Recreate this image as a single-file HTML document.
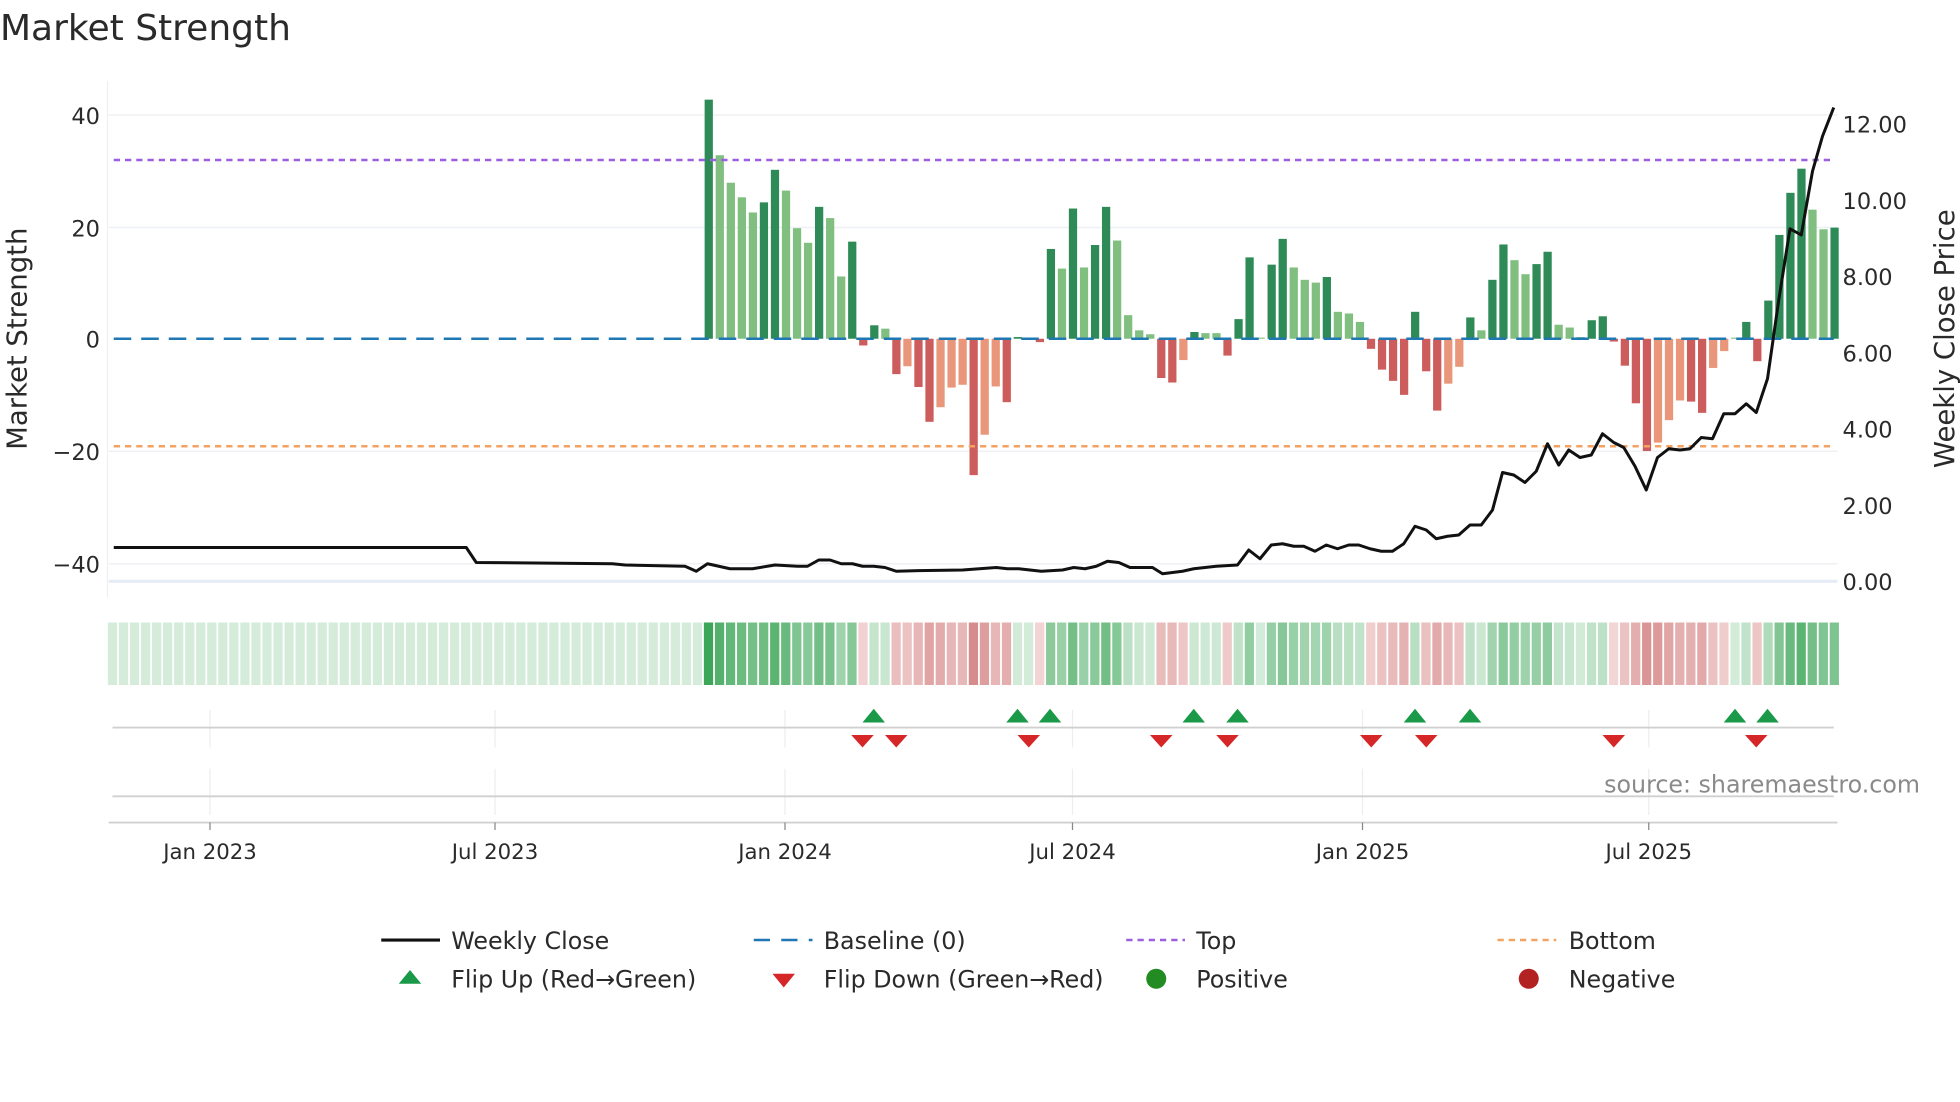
<!DOCTYPE html>
<html><head><meta charset="utf-8"><style>
html,body{margin:0;padding:0;background:#fff;width:1960px;height:1102px;overflow:hidden}
svg{display:block}
text{font-family:"DejaVu Sans","Liberation Sans",sans-serif;fill:#2a2a2a}
</style></head><body>
<svg id="s" width="1960" height="1102" viewBox="0 0 1568 881.6" preserveAspectRatio="none" xmlns="http://www.w3.org/2000/svg">
<text x="0" y="32" font-size="28.8">Market Strength</text>
<line x1="86" y1="65" x2="86" y2="478" stroke="#eef0f3" stroke-width="1"/>
<g stroke="#eef0f3" stroke-width="1.2">
<line x1="87" y1="92" x2="1470" y2="92"/><line x1="87" y1="182" x2="1470" y2="182"/>
<line x1="87" y1="361" x2="1470" y2="361"/><line x1="87" y1="451" x2="1470" y2="451"/>
</g>
<line x1="87" y1="465" x2="1470" y2="465" stroke="#e6ecf5" stroke-width="2.5"/>
<g font-size="18" text-anchor="end">
<text x="80" y="99">40</text><text x="80" y="189">20</text><text x="80" y="278">0</text><text x="80" y="368">−20</text><text x="80" y="458">−40</text>
</g>
<g font-size="18">
<text x="1474" y="106">12.00</text><text x="1474" y="167">10.00</text><text x="1474" y="228">8.00</text><text x="1474" y="289">6.00</text><text x="1474" y="350">4.00</text><text x="1474" y="411">2.00</text><text x="1474" y="472">0.00</text>
</g>
<text font-size="22" transform="translate(21,271) rotate(-90)" text-anchor="middle">Market Strength</text>
<text font-size="22" transform="translate(1563,271) rotate(-90)" text-anchor="middle">Weekly Close Price</text>
<g id="bars"></g>
<line x1="91" y1="271" x2="1467" y2="271" stroke="#1f77b4" stroke-width="2" stroke-dasharray="14,8"/>
<line x1="91" y1="128" x2="1467" y2="128" stroke="#9b5fe0" stroke-width="2" stroke-dasharray="5,4"/>
<line x1="91" y1="357" x2="1467" y2="357" stroke="#f4a261" stroke-width="2" stroke-dasharray="5,4"/>
<polyline id="line" fill="none" stroke="#111" stroke-width="2.4" stroke-linejoin="round"/>
<g id="heat"></g>
<g stroke="#eceef1" stroke-width="1">
<line x1="168" y1="568" x2="168" y2="598"/><line x1="396" y1="568" x2="396" y2="598"/><line x1="628" y1="568" x2="628" y2="598"/><line x1="858" y1="568" x2="858" y2="598"/><line x1="1090" y1="568" x2="1090" y2="598"/><line x1="1319" y1="568" x2="1319" y2="598"/>
<line x1="168" y1="615" x2="168" y2="652"/><line x1="396" y1="615" x2="396" y2="652"/><line x1="628" y1="615" x2="628" y2="652"/><line x1="858" y1="615" x2="858" y2="652"/><line x1="1090" y1="615" x2="1090" y2="652"/><line x1="1319" y1="615" x2="1319" y2="652"/>
</g>
<line x1="90" y1="582" x2="1467" y2="582" stroke="#d0d0d0" stroke-width="1.5"/>
<line x1="90" y1="637" x2="1467" y2="637" stroke="#d0d0d0" stroke-width="1.5"/>
<line x1="87" y1="658" x2="1470" y2="658" stroke="#d0d0d0" stroke-width="1.5"/>
<g id="tri"></g>
<text x="1536" y="634" font-size="19" text-anchor="end" style="fill:#8a8a8a">source: sharemaestro.com</text>
<g stroke="#888" stroke-width="1"><line x1="168" y1="658" x2="168" y2="664"/><line x1="396" y1="658" x2="396" y2="664"/><line x1="628" y1="658" x2="628" y2="664"/><line x1="858" y1="658" x2="858" y2="664"/><line x1="1090" y1="658" x2="1090" y2="664"/><line x1="1319" y1="658" x2="1319" y2="664"/></g>
<g font-size="17" text-anchor="middle">
<text x="168" y="687">Jan 2023</text><text x="396" y="687">Jul 2023</text><text x="628" y="687">Jan 2024</text><text x="858" y="687">Jul 2024</text><text x="1090" y="687">Jan 2025</text><text x="1319" y="687">Jul 2025</text>
</g>
<g font-size="19">
<line x1="305" y1="752" x2="352" y2="752" stroke="#111" stroke-width="2.5"/>
<text x="361" y="759">Weekly Close</text>
<line x1="603" y1="752" x2="650" y2="752" stroke="#1f77b4" stroke-width="2" stroke-dasharray="13,9"/>
<text x="659" y="759">Baseline (0)</text>
<line x1="901" y1="752" x2="948" y2="752" stroke="#9b5fe0" stroke-width="2" stroke-dasharray="5,4"/>
<text x="957" y="759">Top</text>
<line x1="1198" y1="752" x2="1245" y2="752" stroke="#f4a261" stroke-width="2" stroke-dasharray="5,4"/>
<text x="1255" y="759">Bottom</text>
<polygon points="319,787 337,787 328,776" fill="#1a9a48"/>
<text x="361" y="790">Flip Up (Red→Green)</text>
<polygon points="618,779 636,779 627,790" fill="#d62728"/>
<text x="659" y="790">Flip Down (Green→Red)</text>
<circle cx="925" cy="783" r="8" fill="#228b22"/>
<text x="957" y="790">Positive</text>
<circle cx="1223" cy="783" r="8" fill="#b22222"/>
<text x="1255" y="790">Negative</text>
</g>
</svg>
<script>
var NS="http://www.w3.org/2000/svg";
function el(t,a,p){var e=document.createElementNS(NS,t);for(var k in a)e.setAttribute(k,a[k]);document.getElementById(p).appendChild(e);return e;}
var d=[[42.6,'D'],[32.7,'L'],[27.8,'L'],[25.2,'L'],[22.5,'L'],[24.3,'D'],[30.1,'D'],[26.4,'L'],[19.7,'L'],[17.1,'L'],[23.5,'D'],[21.5,'L'],[11.1,'L'],[17.3,'D'],[-1.2,'R'],[2.4,'D'],[1.8,'L'],[-6.3,'R'],[-4.9,'S'],[-8.6,'R'],[-14.8,'R'],[-12.2,'S'],[-8.7,'S'],[-8.2,'S'],[-24.3,'R'],[-17.1,'S'],[-8.5,'S'],[-11.3,'R'],[0.3,'D'],[0.2,'L'],[-0.6,'R'],[16,'D'],[12.5,'L'],[23.2,'D'],[12.7,'L'],[16.7,'D'],
[23.5,'D'],[17.5,'L'],[4.2,'L'],[1.5,'L'],[0.8,'L'],[-7,'R'],[-7.8,'R'],[-3.8,'S'],[1.2,'D'],[1,'L'],[1,'L'],[-3,'R'],[3.5,'D'],[14.5,'D'],[0.2,'L'],[13.2,'D'],[17.8,'D'],[12.7,'L'],[10.5,'L'],[10,'L'],[11,'D'],[4.8,'L'],[4.5,'L'],[3,'L'],[-1.8,'R'],[-5.5,'R'],[-7.5,'R'],[-10,'R'],[4.8,'D'],[-5.8,'R'],[-12.8,'R'],[-8,'S'],[-5,'S'],[3.8,'D'],[1.5,'L'],[10.5,'D'],[16.8,'D'],[14,'L'],[11.5,'L'],[13.3,'D'],[15.5,'D'],[2.5,'L'],[2,'L'],[0.3,'L'],[3.3,'D'],[4,'D'],[-0.5,'R'],[-4.8,'R'],[-11.5,'R'],[-20,'R'],[-18.5,'S'],[-14.5,'S'],[-11,'S'],[-11.2,'R'],[-13.2,'R'],[-5.2,'S'],[-2.2,'S'],[0.2,'L'],[3,'D'],[-4,'R'],[6.8,'D'],[18.5,'D'],[26,'D'],[30.3,'D'],[23,'L'],[19.5,'L'],[19.8,'D']];
var col={D:'#2e8b57',L:'#80bf80',R:'#cd5c5c',S:'#e9967a'};
function X(i){return 567+(i-54)*8.83;}
var U=4.49;
for(var j=0;j<d.length;j++){var i=54+j,v=d[j][0],h=Math.abs(v)*U;
 el('rect',{x:X(i)-3.3,y:v>0?271-h:271,width:6.6,height:Math.max(h,0.8),fill:col[d[j][1]]},'bars');}
function mix(a,b,t){var r='#';for(var k=0;k<3;k++){var c=Math.round(a[k]+(b[k]-a[k])*t);r+=('0'+c.toString(16)).slice(-2);}return r;}
for(var i=0;i<157;i++){var c;
 if(i<54)c='#d5ecdb';else{var v=d[i-54][0];
  if(v>=0)c=mix([213,236,219],[61,166,88],Math.min(1,Math.pow(v/40,0.8)));
  else c=mix([244,216,216],[214,140,140],Math.min(1,Math.pow(-v/24,0.8)));}
 el('rect',{x:X(i)-3.9,y:498,width:7.4,height:50,fill:c},'heat');}
var p=[[91,438],[373,438],[381,450],[490,451],[500,452],[548,453],[557,457],[566,451],[575,453],[584,455],[602,455],[620,452],[638,453],[646,453],[655,448],[664,448],[673,451],[682,451],[690,453],[699,453],[708,454],[717,457],[735,456.5],[770,456],[797,454],[806,455],[815,455],[824,456],[833,457],[850,456],[859,454],[868,455],[877,453],[886,449],[895,450],[904,454],[913,454],[922,454],[930,459],[946,457],[955,455],[973,453],[990,452],[999,440],[1008,447],[1017,436],[1026,435],[1035,437],[1043,437],[1052,441],[1061,436],[1070,439],[1079,436],[1087,436],[1096,439],[1105,441],[1114,441],[1123,435],[1132,421],[1141,424],[1149,431],[1158,429],[1167,428],[1176,420],[1185,420],[1194,408],[1202,378],[1211,380],[1220,386],[1229,377],[1238,355],[1247,372],[1255,360],[1264,366],[1273,364],[1282,347],[1291,354],[1299,358],[1308,373],[1317,392],[1326,366],[1335,359],[1344,360],[1352,359],[1361,350],[1370,351],[1379,331],[1388,331],[1397,323],[1405,330],[1414,303],[1423,240],[1432,183],[1441,188],[1450,137],[1458,109],[1467,86]];
document.getElementById('line').setAttribute('points',p.map(function(q){return q.join(',')}).join(' '));
[699,814,840,955,990,1132,1176,1388,1414].forEach(function(x){el('polygon',{points:(x-9)+',578 '+(x+9)+',578 '+x+',567',fill:'#1a9a48'},'tri');});
[690,717,823,929,982,1097,1141,1291,1405].forEach(function(x){el('polygon',{points:(x-9)+',588 '+(x+9)+',588 '+x+',598',fill:'#d62728'},'tri');});
</script>
</body></html>
